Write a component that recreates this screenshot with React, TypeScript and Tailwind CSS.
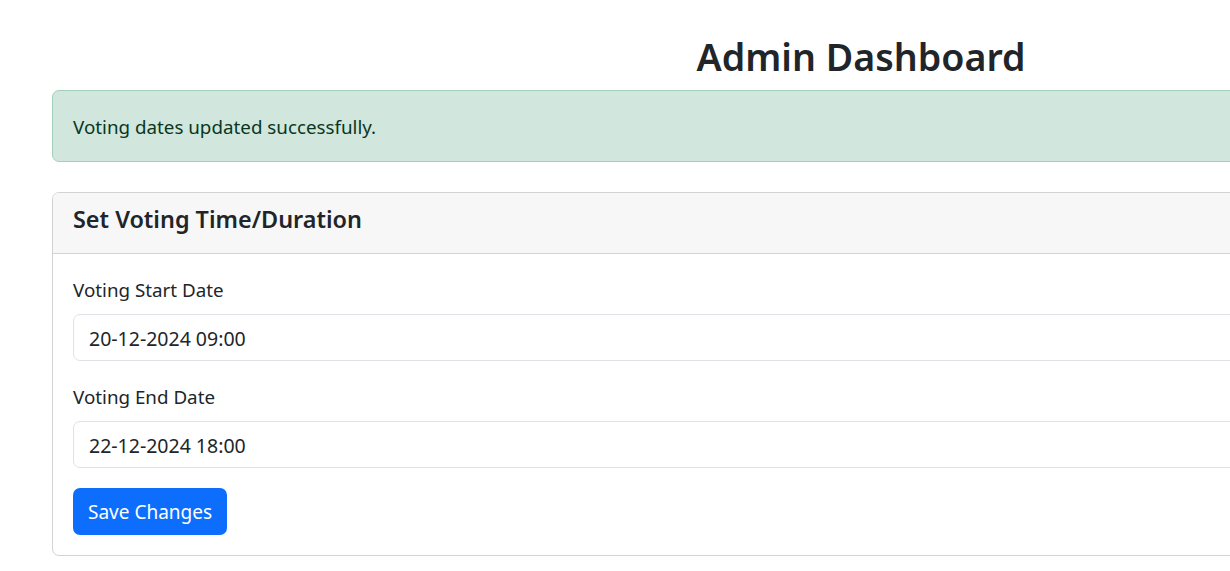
export default function App() {
  const fields = [
    ['Voting Start Date', '20-12-2024 09:00'],
    ['Voting End Date', '22-12-2024 18:00'],
  ];

  return (
    <div
      className="w-full min-h-[571px] overflow-hidden bg-white text-[#212529]"
      style={{ fontFamily: '"Noto Sans", "Open Sans", sans-serif' }}
    >
      <div className="ml-[52px] w-[1618px] pt-[33px]">
        <h1 className="text-center text-[37.6px] leading-[48px] font-semibold mb-[9px]">
          Admin Dashboard
        </h1>

        <div className="rounded-[7px] border border-[#a3cfbb] bg-[#d1e7dd] px-[20px] pt-[21px] pb-[19px] text-[18.8px] leading-[30px] text-[#0a3622]">
          Voting dates updated successfully.
        </div>

        <div className="mt-[30px] rounded-[7px] border border-[#d3d3d4] overflow-hidden">
          <div className="bg-[#f7f7f7] border-b border-[#d3d3d4] px-[20px] pt-[11px] pb-[19px]">
            <h5 className="text-[23.4px] leading-[30px] font-semibold">
              Set Voting Time/Duration
            </h5>
          </div>

          <div className="p-[20px]">
            {fields.map(([label, value]) => (
              <div className="mb-[20px]" key={label}>
                <label className="block text-[18.8px] leading-[30px] pt-[1px] mb-[9px]">
                  {label}
                </label>
                <div className="h-[47px] rounded-[7px] border border-[#dee2e6] px-[15px] pt-[2px] flex items-center text-[19.5px]">
                  {value}
                </div>
              </div>
            ))}
            <button className="h-[47px] rounded-[7px] bg-[#0d6efd] px-[15px] pt-[2px] text-[19px] text-white">
              Save Changes
            </button>
          </div>
        </div>
      </div>
    </div>
  );
}
